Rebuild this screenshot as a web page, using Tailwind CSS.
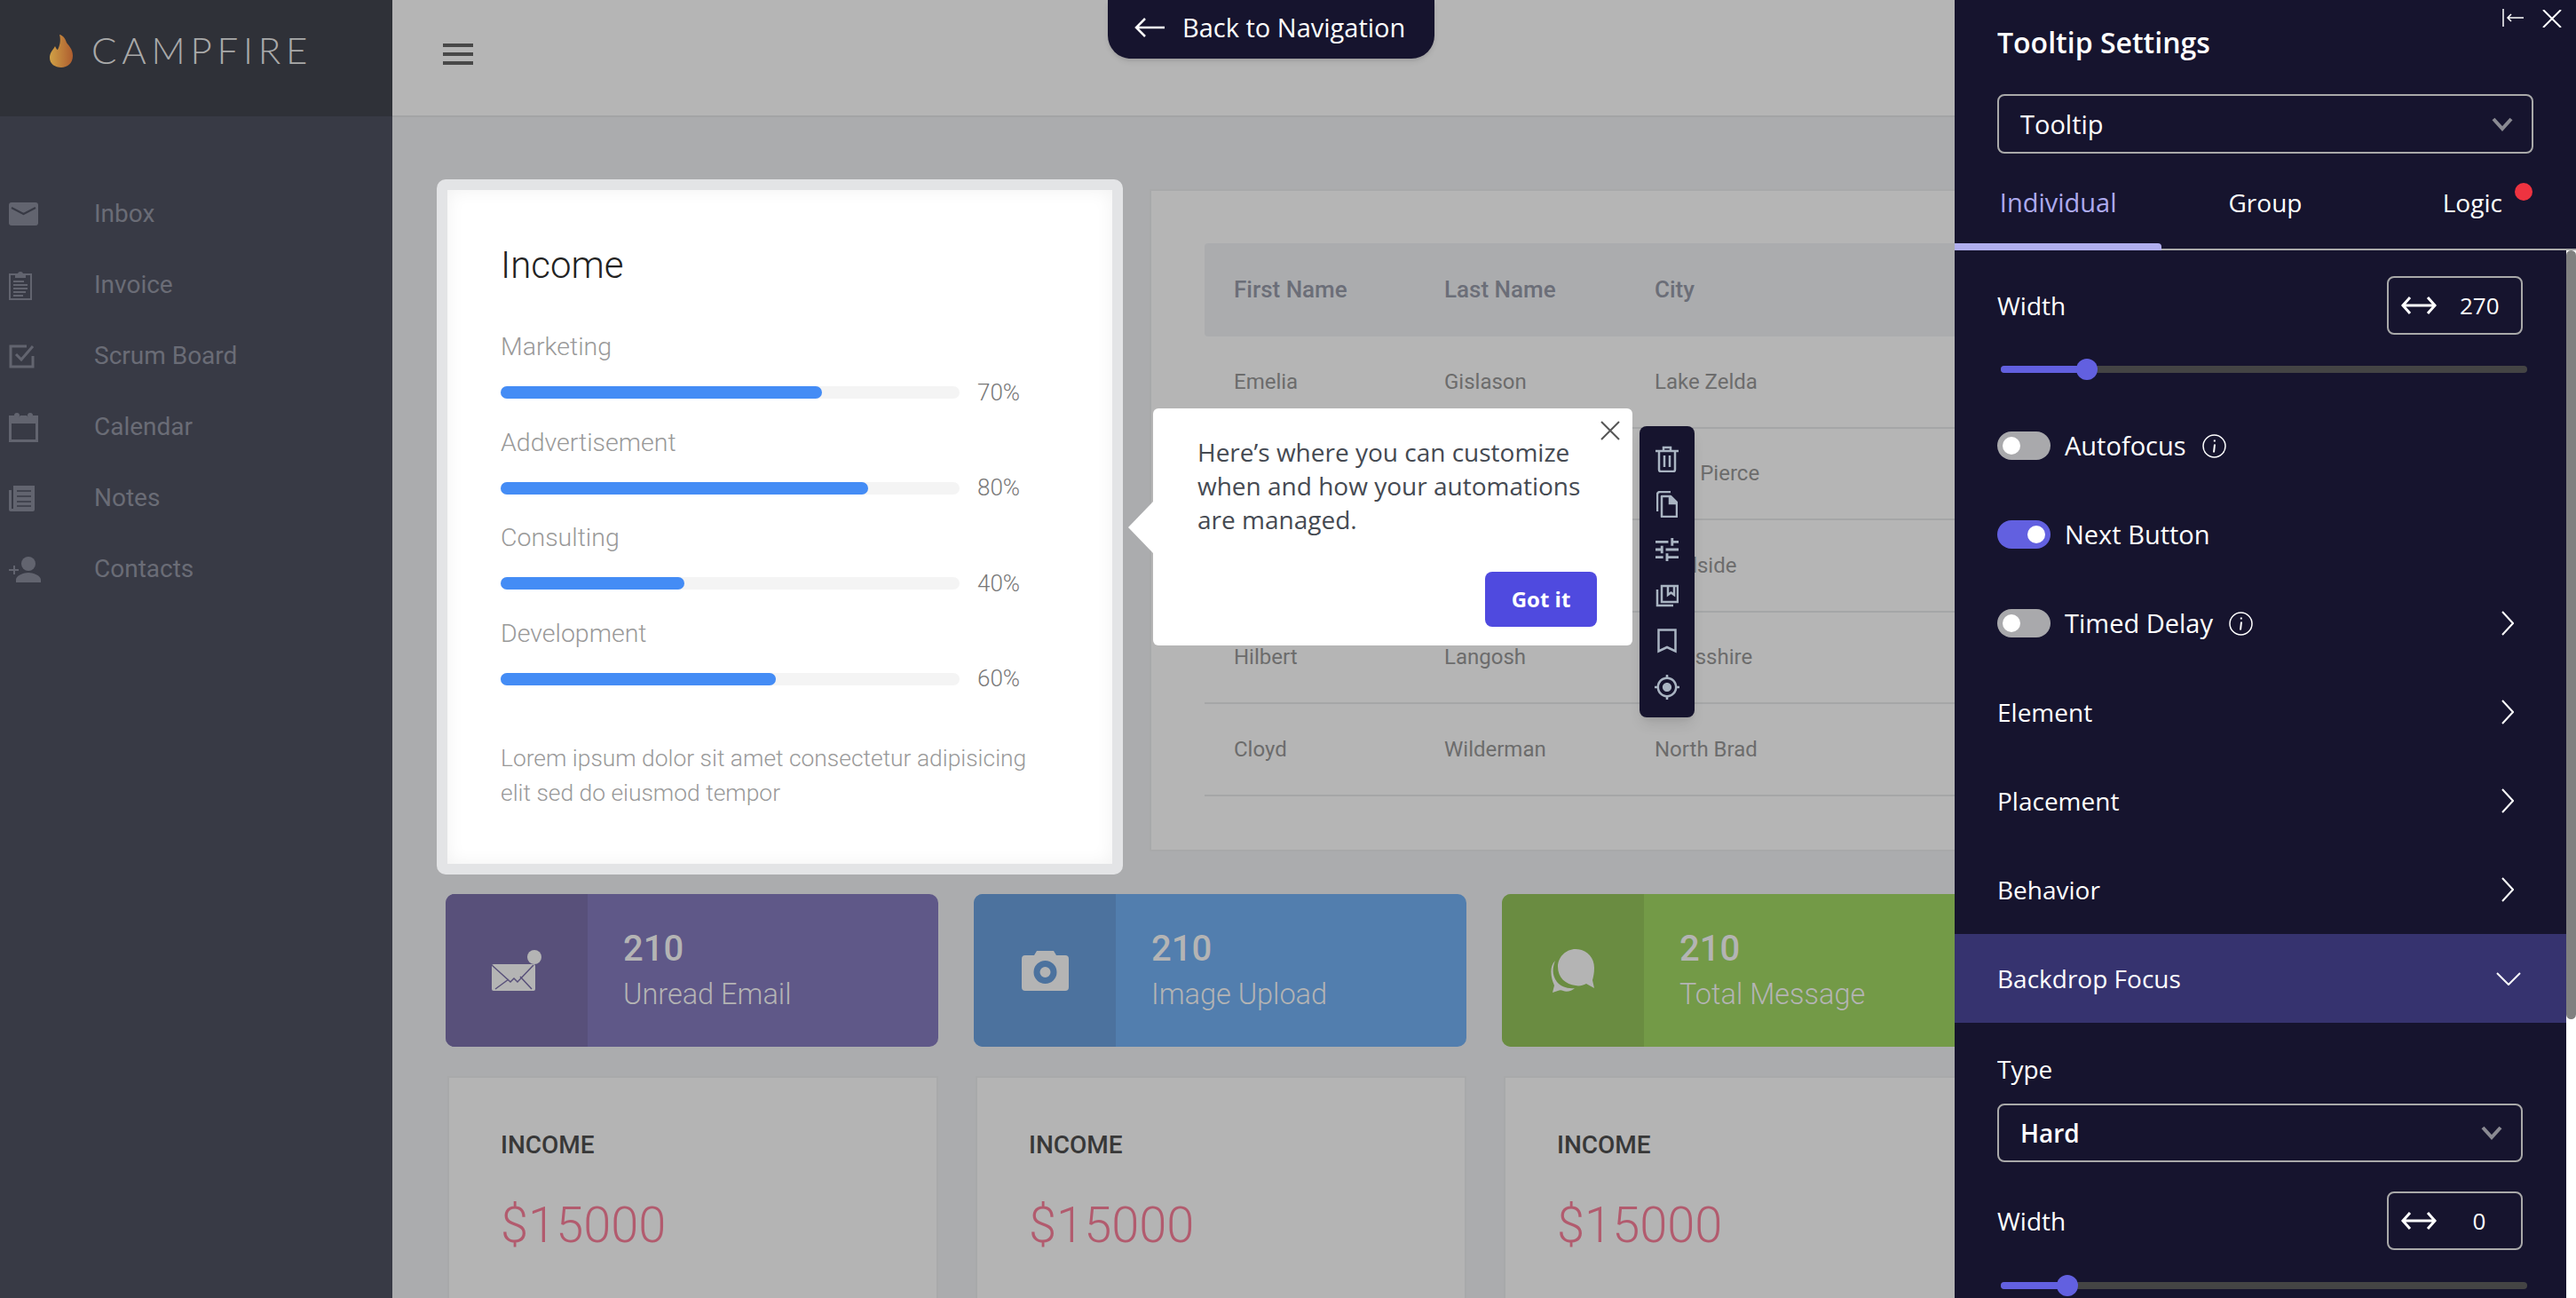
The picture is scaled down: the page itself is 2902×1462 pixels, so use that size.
<!DOCTYPE html>
<html lang="en">
<head>
    <meta charset="UTF-8">
    <title>Campfire - Tooltip Settings</title>
    <script src="https://cdn.jsdelivr.net/npm/@tailwindcss/browser@4"></script>
</head>
<body class="bg-[#abacae]">
<div class="relative flex w-[2902px] h-[1462px] overflow-hidden font-['Roboto',sans-serif]">

    <!-- sidebar -->
    <aside class="w-[442px] shrink-0 bg-[#383a45]">
        <div class="flex items-center h-[131px] bg-[#2f3138] pl-[56px]">
            <svg class="w-[26px] h-[37px] mt-[-17px]" viewBox="0 0 26 37">
                <defs><linearGradient id="flame" x1="0" y1="0" x2="1" y2="0"><stop offset="0" stop-color="#d0a146"/><stop offset="1" stop-color="#ae5d2f"/></linearGradient></defs>
                <path fill="url(#flame)" d="M11 0c5 1 7 6 8 9 2 3 7 7 7 15 0 8-6 13-13 13S0 33 0 26c0-6 4-9 6-13 1 2 2 4 3 4 2-4 4-10 2-17z"/>
            </svg>
            <span class="ml-[21px] mb-[20px] text-[42px] leading-[50px] font-light tracking-[5.800px] text-[#a9a9a9] font-['Lato',sans-serif]">CAMPFIRE</span>
        </div>
        <nav class="pt-[70px] text-[28px] text-[#6a6c76]">
            <a class="flex items-center h-[80px] pl-[10px]">
                <span class="w-[96px]"><svg class="w-[33px] h-[26px]" viewBox="0 0 33 26"><rect width="33" height="26" rx="3" fill="#62646f"/><path d="M3 6l13.500 7L30 6" fill="none" stroke="#383a45" stroke-width="2"/></svg></span>
                Inbox
            </a>
            <a class="flex items-center h-[80px] pl-[10px]">
                <span class="w-[96px]"><svg class="w-[26px] h-[33px]" viewBox="0 0 26 33" fill="none" stroke="#62646f" stroke-width="2"><path d="M8 4H1v28h24V4h-7"/><path d="M8 7V4h3a2 2 0 0 1 4 0h3v3z" fill="#62646f"/><path d="M5 12h12M5 16h16M5 20h16M5 24h14M5 28h11"/></svg></span>
                Invoice
            </a>
            <a class="flex items-center h-[80px] pl-[10px]">
                <span class="w-[96px]"><svg class="w-[29px] h-[28px]" viewBox="0 0 29 28" fill="none" stroke="#62646f" stroke-width="3"><path d="M20 3H2v23h25V14"/><path d="M8 12l6 6L27 3"/></svg></span>
                Scrum Board
            </a>
            <a class="flex items-center h-[80px] pl-[10px]">
                <span class="w-[96px]"><svg class="w-[33px] h-[33px]" viewBox="0 0 33 33"><path fill="#62646f" d="M0 3h6a4 4 0 0 0 7 0h7a4 4 0 0 0 7 0h6v30H0zm3 9v18h27V12z"/><circle cx="9" cy="3" r="3" fill="#62646f"/><circle cx="24" cy="3" r="3" fill="#62646f"/></svg></span>
                Calendar
            </a>
            <a class="flex items-center h-[80px] pl-[10px]">
                <span class="w-[96px]"><svg class="w-[29px] h-[29px]" viewBox="0 0 29 29"><path fill="#62646f" d="M5 0h24v27a2 2 0 0 1-2 2H2a2 2 0 0 1-2-2V5h3v21h2z"/><path d="M9 6h16M9 12h16M9 18h16M9 23h16" stroke="#383a45" stroke-width="1.500"/></svg></span>
                Notes
            </a>
            <a class="flex items-center h-[80px] pl-[10px]">
                <span class="w-[96px]"><svg class="w-[36px] h-[29px]" viewBox="0 0 36 29"><circle cx="22" cy="8" r="8" fill="#62646f"/><path fill="#62646f" d="M8 29v-3c0-5 9-8 14-8s14 3 14 8v3zM5 10h2v4h4v2H7v4H5v-4H0v-2h5z"/></svg></span>
                Contacts
            </a>
        </nav>
    </aside>

    <!-- main -->
    <main class="flex-1 min-w-0 bg-[#abacae]">
        <header class="flex items-center h-[132px] bg-[#b5b5b5] border-b-2 border-[#a3a4a5] pl-[57px]">
            <div class="flex flex-col gap-[6px] mt-[-8px] w-[34px]">
                <span class="h-[4px] bg-[#484848]"></span>
                <span class="h-[4px] bg-[#484848]"></span>
                <span class="h-[4px] bg-[#484848]"></span>
            </div>
        </header>

        <div class="pt-[70px] pl-[50px]">
            <div class="flex items-start">
                <!-- income card, highlighted by the tooltip -->
                <div class="w-[773px] h-[783px] p-[12px] rounded-[10px] bg-[#e3e4e6] shrink-0">
                    <div class="h-full bg-white px-[60px] pt-[61px] shadow-[inset_0_0_20px_rgba(0,0,0,0.06)]">
                        <h2 class="text-[42px] leading-[48px] font-light text-[#222]">Income</h2>
                        <div class="mt-[50px] flex flex-col gap-[31.5px] text-[28.5px] font-light text-[#999]">
                            <div>
                                <div class="h-[36px] leading-[36px]">Marketing</div>
                                <div class="flex items-center gap-[20px] h-[14px] mt-[26px]">
                                    <div class="w-[517px] h-[14px] rounded-full bg-[#f4f4f4]"><div class="w-[70%] h-full rounded-full bg-[#448cf5]"></div></div>
                                    <span class="text-[26px] text-[#777]">70%</span>
                                </div>
                            </div>
                            <div>
                                <div class="h-[36px] leading-[36px]">Addvertisement</div>
                                <div class="flex items-center gap-[20px] h-[14px] mt-[26px]">
                                    <div class="w-[517px] h-[14px] rounded-full bg-[#f4f4f4]"><div class="w-[80%] h-full rounded-full bg-[#448cf5]"></div></div>
                                    <span class="text-[26px] text-[#777]">80%</span>
                                </div>
                            </div>
                            <div>
                                <div class="h-[36px] leading-[36px]">Consulting</div>
                                <div class="flex items-center gap-[20px] h-[14px] mt-[26px]">
                                    <div class="w-[517px] h-[14px] rounded-full bg-[#f4f4f4]"><div class="w-[40%] h-full rounded-full bg-[#448cf5]"></div></div>
                                    <span class="text-[26px] text-[#777]">40%</span>
                                </div>
                            </div>
                            <div>
                                <div class="h-[36px] leading-[36px]">Development</div>
                                <div class="flex items-center gap-[20px] h-[14px] mt-[26px]">
                                    <div class="w-[517px] h-[14px] rounded-full bg-[#f4f4f4]"><div class="w-[60%] h-full rounded-full bg-[#448cf5]"></div></div>
                                    <span class="text-[26px] text-[#777]">60%</span>
                                </div>
                            </div>
                        </div>
                        <p class="mt-[63px] text-[26.4px] leading-[39px] font-light text-[#999]">Lorem ipsum dolor sit amet consectetur adipisicing elit sed do eiusmod tempor</p>
                    </div>
                </div>

                <!-- table card -->
                <div class="ml-[30px] mt-[11px] w-[1100px] h-[746px] shrink-0 bg-[#b5b5b5] border-2 border-[#a8a9aa] pl-[60px] pt-[59px] text-[24px]">
                    <div class="flex items-center h-[105px] pl-[33px] bg-[#abacae] rounded-[4px] text-[26px] font-medium text-[#6b6e78]">
                        <span class="w-[237px]">First Name</span><span class="w-[237px]">Last Name</span><span>City</span>
                    </div>
                    <div class="flex items-center h-[103.5px] pl-[33px] border-b-2 border-[#a5a6a7] text-[#6c6c6c]">
                        <span class="w-[237px]">Emelia</span><span class="w-[237px]">Gislason</span><span>Lake Zelda</span>
                    </div>
                    <div class="flex items-center h-[103.5px] pl-[33px] border-b-2 border-[#a5a6a7] text-[#6c6c6c]">
                        <span class="w-[474px]"></span><span>Port Pierce</span>
                    </div>
                    <div class="flex items-center h-[103.5px] pl-[33px] border-b-2 border-[#a5a6a7] text-[#6c6c6c]">
                        <span class="w-[474px]"></span><span>Marlside</span>
                    </div>
                    <div class="flex items-center h-[103.5px] pl-[33px] border-b-2 border-[#a5a6a7] text-[#6c6c6c]">
                        <span class="w-[237px]">Hilbert</span><span class="w-[237px]">Langosh</span><span>Louisshire</span>
                    </div>
                    <div class="flex items-center h-[103.5px] pl-[33px] border-b-2 border-[#a5a6a7] text-[#6c6c6c]">
                        <span class="w-[237px]">Cloyd</span><span class="w-[237px]">Wilderman</span><span>North Brad</span>
                    </div>
                </div>
            </div>

            <!-- stat cards -->
            <div class="flex gap-[40px] mt-[22px] ml-[10px] text-[#b4b4b4]">
                <div class="flex w-[555px] h-[172px] shrink-0 rounded-[10px] overflow-hidden bg-[#5f5888]">
                    <div class="flex items-center justify-center w-[160px] bg-[#58507a]">
                        <svg class="w-[66px] h-[46px] mr-[6px]" viewBox="0 0 66 46"><rect x="8" y="16" width="49" height="30" rx="2" fill="#b4b4b4"/><path d="M8 17l21 19 4-4 4 4 18-19M12 44l15-11M53 44L40 30" fill="none" stroke="#58507a" stroke-width="1.500"/><circle cx="56" cy="8" r="8" fill="#b4b4b4"/></svg>
                    </div>
                    <div class="pl-[40px] pt-[40px]">
                        <div class="text-[40px] leading-[44px] font-medium">210</div>
                        <div class="mt-[9px] text-[32.5px] leading-[40px] font-light">Unread Email</div>
                    </div>
                </div>
                <div class="flex w-[555px] h-[172px] shrink-0 rounded-[10px] overflow-hidden bg-[#527eae]">
                    <div class="flex items-center justify-center w-[160px] bg-[#4c729e]">
                        <svg class="w-[53px] h-[45px]" viewBox="0 0 53 45"><path fill="#b4b4b4" fill-rule="evenodd" d="M4 5h10l3-5h19l3 5h10a4 4 0 0 1 4 4v32a4 4 0 0 1-4 4H4a4 4 0 0 1-4-4V9a4 4 0 0 1 4-4zm22.500 6a13 13 0 1 0 0 26 13 13 0 0 0 0-26zm0 7a6 6 0 1 1 0 12 6 6 0 0 1 0-12z"/></svg>
                    </div>
                    <div class="pl-[40px] pt-[40px]">
                        <div class="text-[40px] leading-[44px] font-medium">210</div>
                        <div class="mt-[9px] text-[32.5px] leading-[40px] font-light">Image Upload</div>
                    </div>
                </div>
                <div class="flex w-[555px] h-[172px] shrink-0 rounded-[10px] overflow-hidden bg-[#739a47]">
                    <div class="flex items-center justify-center w-[160px] bg-[#6a8c41]">
                        <svg class="w-[50px] h-[49px]" viewBox="0 0 50 49"><path fill="#b4b4b4" d="M28 0c12 0 21 9 21 21 0 6-1 10-2 14l2 9-9-5c-4 2-8 3-12 2C17 40 8 32 8 20 8 9 17 0 28 0z"/><path fill="#b4b4b4" d="M5 13c-3 8-4 16 2 24 4 5 12 8 20 7-3 3-9 5-13 3-2-1-4-1-6 0l-6 2 2-8C0 32-2 20 5 13z"/></svg>
                    </div>
                    <div class="pl-[40px] pt-[40px]">
                        <div class="text-[40px] leading-[44px] font-medium">210</div>
                        <div class="mt-[9px] text-[32.5px] leading-[40px] font-light">Total Message</div>
                    </div>
                </div>
            </div>

            <!-- income summary cards -->
            <div class="flex gap-[42px] mt-[33px] ml-[12px]">
                <div class="w-[553px] h-[400px] shrink-0 bg-[#b4b4b4] border-2 border-[#a8a9aa] pl-[58px] pt-[58px]">
                    <div class="text-[28px] leading-[36px] font-medium text-[#383838]">INCOME</div>
                    <div class="mt-[40px] text-[56px] leading-[64px] font-light text-[#b25b6e]">$15000</div>
                </div>
                <div class="w-[553px] h-[400px] shrink-0 bg-[#b4b4b4] border-2 border-[#a8a9aa] pl-[58px] pt-[58px]">
                    <div class="text-[28px] leading-[36px] font-medium text-[#383838]">INCOME</div>
                    <div class="mt-[40px] text-[56px] leading-[64px] font-light text-[#b25b6e]">$15000</div>
                </div>
                <div class="w-[553px] h-[400px] shrink-0 bg-[#b4b4b4] border-2 border-[#a8a9aa] pl-[58px] pt-[58px]">
                    <div class="text-[28px] leading-[36px] font-medium text-[#383838]">INCOME</div>
                    <div class="mt-[40px] text-[56px] leading-[64px] font-light text-[#b25b6e]">$15000</div>
                </div>
            </div>
        </div>
    </main>

    <!-- back to navigation pill -->
    <div class="absolute left-[1248px] top-0 flex items-center w-[368px] h-[66px] pl-[30px] pb-[4px] rounded-b-[26px] bg-[#16142e] text-white font-['Open_Sans',sans-serif] text-[29px] font-medium shadow-md">
        <svg class="w-[34px] h-[24px] mr-[20px]" viewBox="0 0 34 24" fill="none" stroke="#fff" stroke-width="2.500"><path d="M34 12H2M12 2L2 12l10 10"/></svg>
        Back to Navigation
    </div>

    <!-- tooltip -->
    <div class="absolute left-[1299px] top-[460px] w-[540px] h-[267px] rounded-[6px] bg-white font-['Open_Sans',sans-serif]">
        <span class="absolute left-[-28px] top-[105px] w-0 h-0 border-y-[29px] border-y-transparent border-r-[28px] border-r-white"></span>
        <svg class="absolute left-[504px] top-[14px] w-[22px] h-[22px]" viewBox="0 0 22 22" stroke="#555" stroke-width="2"><path d="M1 1l20 20M21 1L1 21"/></svg>
        <p class="pt-[30px] pl-[50px] text-[28px] leading-[38px] text-[#454a52]">Here’s where you can customize<br>when and how your automations<br>are managed.</p>
        <button class="absolute left-[374px] top-[184px] w-[126px] h-[62px] rounded-[8px] bg-[#4f4adf] text-white text-[24px] font-bold">Got it</button>
    </div>

    <!-- tooltip toolbar -->
    <div class="absolute left-[1847px] top-[480px] flex flex-col items-center w-[62px] h-[328px] pt-[11px] rounded-[8px] bg-[#16142e] shadow-lg">
        <div class="flex items-center justify-center h-[51.4px]"><svg class="w-[26px] h-[30px]" viewBox="0 0 26 30" fill="none" stroke="#a9b4c2" stroke-width="2.500"><path d="M0 6h26M9 6V2h8v4M4 6v21a2 2 0 0 0 2 2h14a2 2 0 0 0 2-2V6M10 11v13M16 11v13"/></svg></div>
        <div class="flex items-center justify-center h-[51.4px]"><svg class="w-[24px] h-[30px]" viewBox="0 0 24 30" fill="none" stroke="#a9b4c2" stroke-width="2.500"><path d="M16 1H4a3 3 0 0 0-3 3v19"/><path d="M6 6h10l7 7v16H6z" stroke-linejoin="round"/><path d="M15 6v8h8" fill="#a9b4c2"/></svg></div>
        <div class="flex items-center justify-center h-[51.4px]"><svg class="w-[26px] h-[26px]" viewBox="3 3 18 18"><path fill="#a9b4c2" d="M3 17v2h6v-2H3zM3 5v2h10V5H3zm10 16v-2h8v-2h-8v-2h-2v6h2zM7 9v2H3v2h4v2h2V9H7zm14 4v-2H11v2h10zm-6-4h2V7h4V5h-4V3h-2v6z"/></svg></div>
        <div class="flex items-center justify-center h-[51.4px]"><svg class="w-[26px] h-[26px]" viewBox="0 0 26 26" fill="none" stroke="#a9b4c2" stroke-width="2.500"><path d="M2 6v18h18"/><path d="M7 2h18v18H7z"/><path d="M14 2v10l3.500-2.500L21 12V2"/></svg></div>
        <div class="flex items-center justify-center h-[51.4px]"><svg class="w-[22px] h-[28px]" viewBox="0 0 22 28" fill="none" stroke="#a9b4c2" stroke-width="2.500"><path d="M1.500 1.500h19v24L11 21l-9.500 4.500z"/></svg></div>
        <div class="flex items-center justify-center h-[51.4px]"><svg class="w-[28px] h-[28px]" viewBox="1 1 22 22"><path fill="#a9b4c2" d="M12 8c-2.210 0-4 1.790-4 4s1.790 4 4 4 4-1.790 4-4-1.790-4-4-4zm8.940 3c-.46-4.170-3.770-7.480-7.940-7.940V1h-2v2.060C6.830 3.520 3.520 6.830 3.060 11H1v2h2.060c.46 4.170 3.770 7.480 7.940 7.940V23h2v-2.060c4.170-.46 7.480-3.770 7.940-7.940H23v-2h-2.060zM12 19c-3.870 0-7-3.130-7-7s3.130-7 7-7 7 3.130 7 7-3.130 7-7 7z"/></svg></div>
    </div>

    <!-- settings panel -->
    <section class="absolute right-0 top-0 w-[700px] h-[1462px] overflow-hidden bg-[#16142e] text-white font-['Open_Sans',sans-serif] text-[28px]">
        <svg class="absolute left-[617px] top-[10px] w-[24px] h-[20px]" viewBox="0 0 24 20" fill="none" stroke="#fff" stroke-width="1.500"><path d="M1 0v20M24 10H6M10 6l-4 4 4 4"/></svg>
        <svg class="absolute left-[662px] top-[11px] w-[22px] h-[20px]" viewBox="0 0 22 20" stroke="#fff" stroke-width="2"><path d="M1 0l20 20M21 0L1 20"/></svg>

        <h3 class="mt-[28px] ml-[48px] text-[32px] leading-[40px] font-semibold">Tooltip Settings</h3>

        <div class="flex items-center justify-between mt-[38px] ml-[48px] w-[604px] h-[67px] pl-[24px] pr-[21px] rounded-[8px] border-2 border-[#a9a9a9] text-[29px] font-medium">
            Tooltip
            <svg class="w-[24px] h-[16px]" viewBox="0 0 24 16" fill="none" stroke="#8a8a92" stroke-width="4"><path d="M2 2l10 11L22 2"/></svg>
        </div>

        <div class="relative flex h-[109px] border-b-2 border-[#a9a9a9] text-[28px] font-medium">
            <div class="relative w-1/3 pt-[35px] text-center leading-[40px] text-[29px] text-[#adaaee]">Individual
                <span class="absolute left-0 bottom-[-2px] w-full h-[8px] rounded-tr-[4px] bg-[#b0aeee]"></span>
            </div>
            <div class="w-1/3 pt-[35px] text-center leading-[40px]">Group</div>
            <div class="relative w-1/3 pt-[35px] text-center leading-[40px]">Logic
                <span class="absolute left-[164px] top-[33px] w-[20px] h-[20px] rounded-full bg-[#ee3340]"></span>
            </div>
        </div>

        <div class="flex items-center justify-between mt-[29px] ml-[48px] mr-[60px] h-[66px]">
            <span>Width</span>
            <div class="flex items-center w-[153px] h-[66px] pl-[13px] rounded-[8px] border-2 border-[#a9a9a9]">
                <svg class="w-[42px] h-[22px]" viewBox="0 0 40 22" fill="none" stroke="#fff" stroke-width="3"><path d="M1 11h38M10 2l-8 9 8 9M30 2l8 9-8 9"/></svg>
                <span class="w-[44px] ml-[25px] text-[26px] text-center">270</span>
            </div>
        </div>
        <div class="relative mt-[35px] ml-[52px] w-[593px] h-[8px] rounded-full bg-[#444444]">
            <div class="w-[97px] h-full rounded-l-full bg-[#6260e0]"></div>
            <span class="absolute left-[85px] top-[-8px] w-[24px] h-[24px] rounded-full bg-[#6260e0]"></span>
        </div>

        <div class="mt-[32px]">
            <div class="flex items-center h-[100px] pl-[48px] text-[29px] font-medium">
                <span class="flex items-center w-[60px] h-[32px] pl-[6px] rounded-full bg-[#a9a9ac]"><span class="w-[20px] h-[20px] rounded-full bg-white"></span></span>
                <span class="ml-[16px]">Autofocus</span>
                <svg class="ml-[18px] w-[27px] h-[27px]" viewBox="0 0 27 27" fill="none" stroke="#fff"><circle cx="13.500" cy="13.500" r="12.500" stroke-width="1.500"/><path d="M14 11.500l-1 9M13.800 6.500v2" stroke-width="2"/></svg>
            </div>
            <div class="flex items-center h-[100px] pl-[48px] text-[29px] font-medium">
                <span class="flex items-center justify-end w-[60px] h-[32px] pr-[6px] rounded-full bg-[#6260e0]"><span class="w-[20px] h-[20px] rounded-full bg-white"></span></span>
                <span class="ml-[16px]">Next Button</span>
            </div>
            <div class="flex items-center h-[100px] pl-[48px] pr-[70px] text-[29px] font-medium">
                <span class="flex items-center w-[60px] h-[32px] pl-[6px] rounded-full bg-[#a9a9ac]"><span class="w-[20px] h-[20px] rounded-full bg-white"></span></span>
                <span class="ml-[16px]">Timed Delay</span>
                <svg class="ml-[18px] w-[27px] h-[27px]" viewBox="0 0 27 27" fill="none" stroke="#fff"><circle cx="13.500" cy="13.500" r="12.500" stroke-width="1.500"/><path d="M14 11.500l-1 9M13.800 6.500v2" stroke-width="2"/></svg>
                <svg class="ml-auto w-[14px] h-[28px]" viewBox="0 0 14 28" fill="none" stroke="#fff" stroke-width="2"><path d="M1 1l12 13L1 27"/></svg>
            </div>
            <div class="flex items-center justify-between h-[100px] pl-[48px] pr-[70px]">
                Element
                <svg class="w-[14px] h-[28px]" viewBox="0 0 14 28" fill="none" stroke="#fff" stroke-width="2"><path d="M1 1l12 13L1 27"/></svg>
            </div>
            <div class="flex items-center justify-between h-[100px] pl-[48px] pr-[70px]">
                Placement
                <svg class="w-[14px] h-[28px]" viewBox="0 0 14 28" fill="none" stroke="#fff" stroke-width="2"><path d="M1 1l12 13L1 27"/></svg>
            </div>
            <div class="flex items-center justify-between h-[100px] pl-[48px] pr-[70px]">
                Behavior
                <svg class="w-[14px] h-[28px]" viewBox="0 0 14 28" fill="none" stroke="#fff" stroke-width="2"><path d="M1 1l12 13L1 27"/></svg>
            </div>
            <div class="flex items-center justify-between h-[100px] pl-[48px] pr-[62px] bg-[#36336f]">
                Backdrop Focus
                <svg class="w-[28px] h-[15px]" viewBox="0 0 28 15" fill="none" stroke="#fff" stroke-width="2"><path d="M1 1l13 13L27 1"/></svg>
            </div>
        </div>

        <div class="mt-[32px] ml-[48px] h-[40px] leading-[40px]">Type</div>
        <div class="flex items-center justify-between mt-[19px] ml-[48px] w-[592px] h-[66px] pl-[24px] pr-[21px] rounded-[8px] border-2 border-[#a9a9a9] text-[28px] font-semibold">
            Hard
            <svg class="w-[24px] h-[16px]" viewBox="0 0 24 16" fill="none" stroke="#8a8a92" stroke-width="4"><path d="M2 2l10 11L22 2"/></svg>
        </div>

        <div class="flex items-center justify-between mt-[33px] ml-[48px] mr-[60px] h-[66px]">
            <span>Width</span>
            <div class="flex items-center w-[153px] h-[66px] pl-[13px] rounded-[8px] border-2 border-[#a9a9a9]">
                <svg class="w-[42px] h-[22px]" viewBox="0 0 40 22" fill="none" stroke="#fff" stroke-width="3"><path d="M1 11h38M10 2l-8 9 8 9M30 2l8 9-8 9"/></svg>
                <span class="w-[44px] ml-[25px] text-[26px] text-center">0</span>
            </div>
        </div>
        <div class="relative mt-[36px] ml-[52px] w-[593px] h-[8px] rounded-full bg-[#444444]">
            <div class="w-[75px] h-full rounded-l-full bg-[#6260e0]"></div>
            <span class="absolute left-[63px] top-[-8px] w-[24px] h-[24px] rounded-full bg-[#6260e0]"></span>
        </div>

        <!-- scrollbar -->
        <div class="absolute right-0 top-[282px] bottom-0 w-[11px] bg-white">
            <div class="h-[866px] rounded-full bg-[#808080]"></div>
        </div>
    </section>
</div>
</body>
</html>
